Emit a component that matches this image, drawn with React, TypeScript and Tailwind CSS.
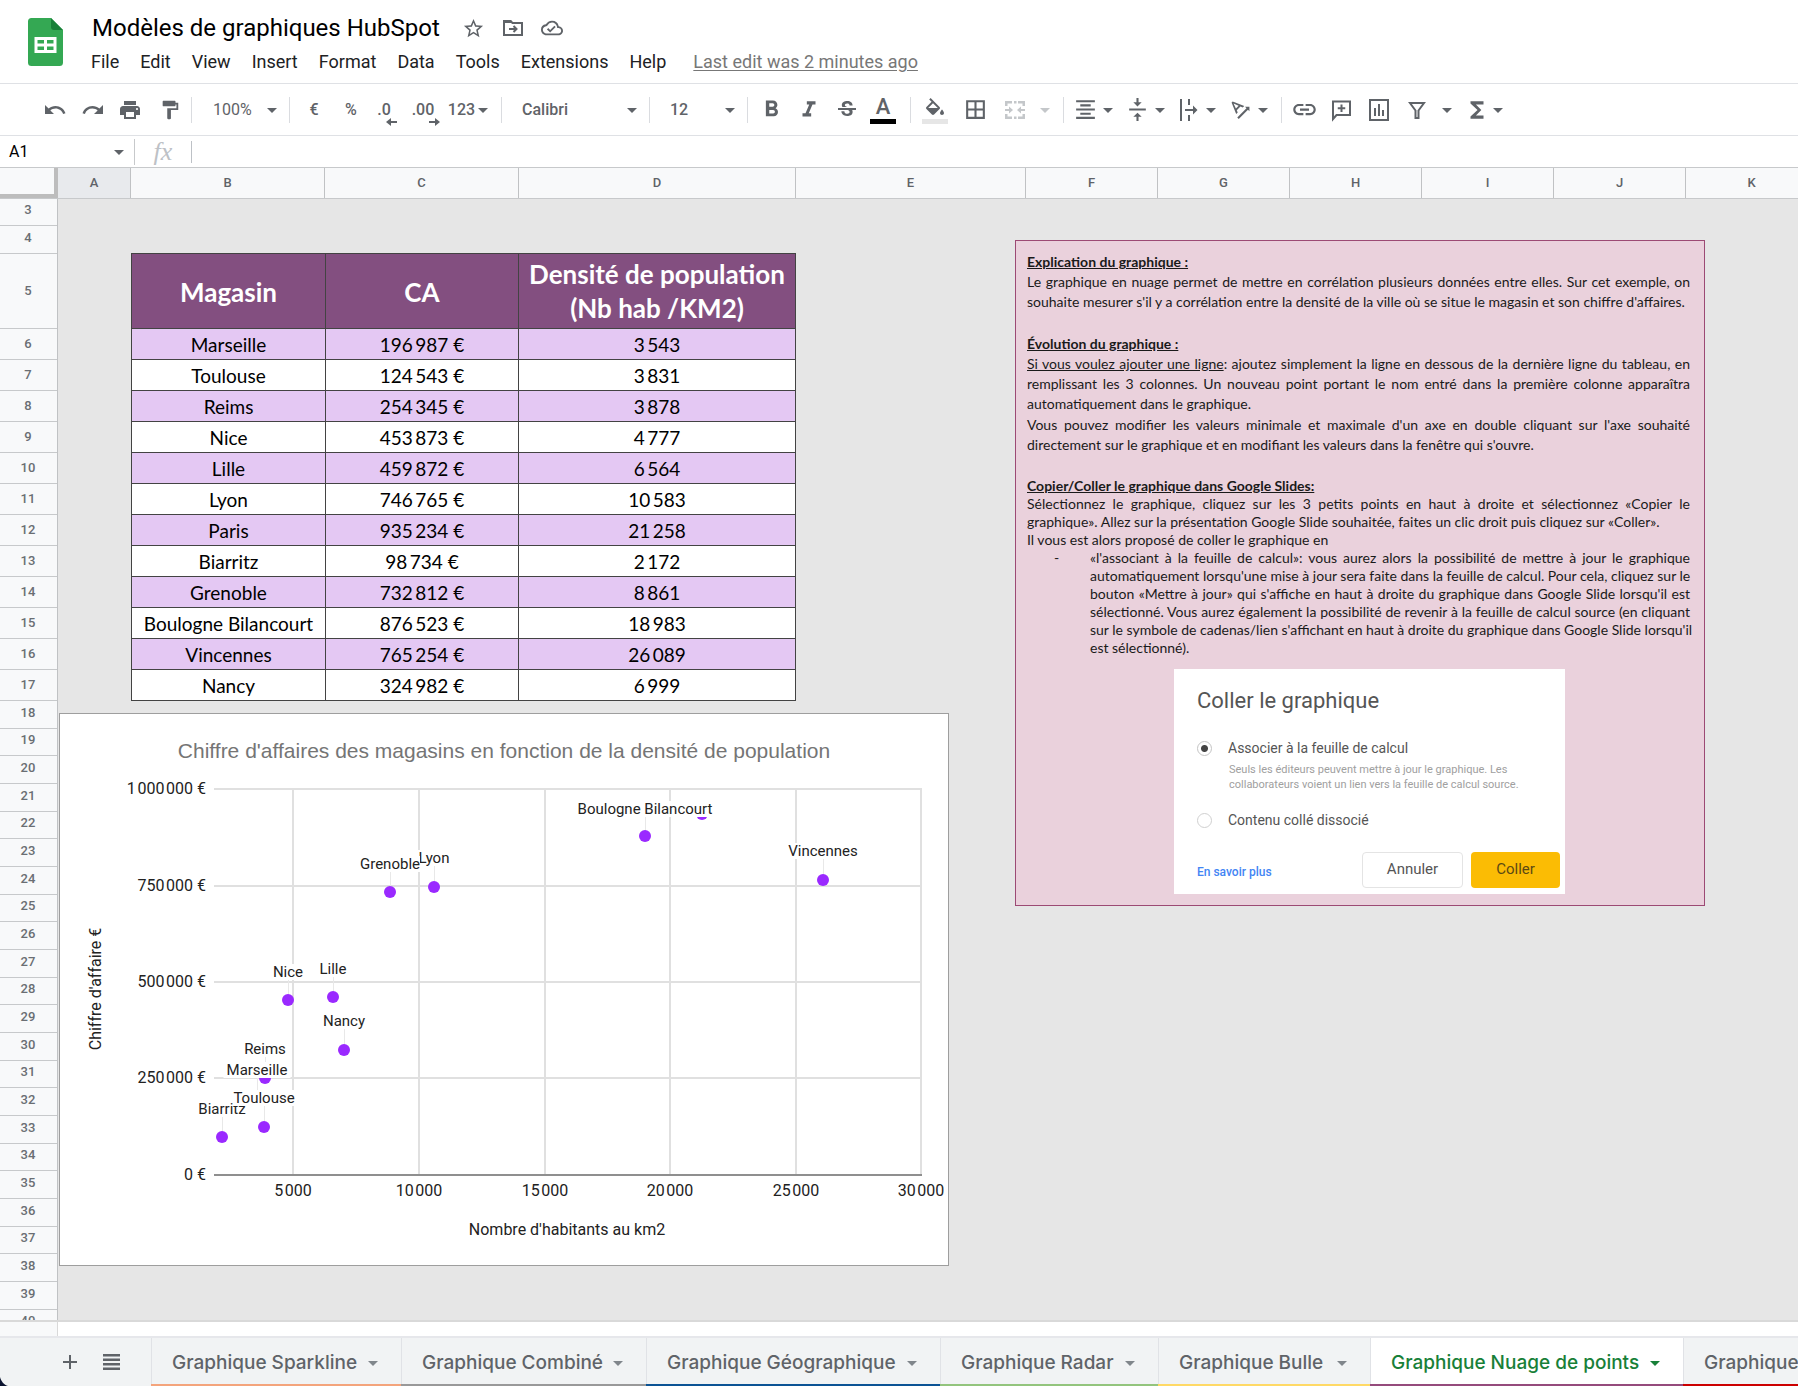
import React from "react";
import {
  MdAdd,
  MdArrowDropDown,
  MdBorderAll,
  MdFormatAlignCenter,
  MdFormatBold,
  MdFormatItalic,
  MdFormatPaint,
  MdFunctions,
  MdLink,
  MdOutlineCloudDone,
  MdPrint,
  MdRedo,
  MdStarBorder,
  MdStrikethroughS,
  MdTextRotationAngleup,
  MdUndo,
  MdVerticalAlignCenter,
} from "react-icons/md";

const NB = "\u2009";
const HAIR = "\u200A";

const menus = ["File", "Edit", "View", "Insert", "Format", "Data", "Tools", "Extensions", "Help"];

const columns = [
  { name: "A", width: "w-[73px] bg-[#e8eaed]" },
  { name: "B", width: "w-[194px]" },
  { name: "C", width: "w-[194px]" },
  { name: "D", width: "w-[277px]" },
  { name: "E", width: "w-[230px]" },
  { name: "F", width: "w-[132px]" },
  { name: "G", width: "w-[132px]" },
  { name: "H", width: "w-[132px]" },
  { name: "I", width: "w-[132px]" },
  { name: "J", width: "w-[132px]" },
  { name: "K", width: "w-[132px]" },
];

const stores = [
  ["Marseille", "196 987 €", "3 543"],
  ["Toulouse", "124 543 €", "3 831"],
  ["Reims", "254 345 €", "3 878"],
  ["Nice", "453 873 €", "4 777"],
  ["Lille", "459 872 €", "6 564"],
  ["Lyon", "746 765 €", "10 583"],
  ["Paris", "935 234 €", "21 258"],
  ["Biarritz", "98 734 €", "2 172"],
  ["Grenoble", "732 812 €", "8 861"],
  ["Boulogne Bilancourt", "876 523 €", "18 983"],
  ["Vincennes", "765 254 €", "26 089"],
  ["Nancy", "324 982 €", "6 999"],
].map(([name, ca, density]) => [name, ca.replace(" ", NB), density.replace(" ", NB)]);

const rowNumbers = Array.from({ length: 38 }, (_, i) => i + 3);

function rowHeight(n: number) {
  if (n === 3) return "h-[27px] pb-1";
  if (n === 4) return "h-[28px] pb-1";
  if (n === 5) return "h-[75px]";
  if (n <= 17) return "h-[31px] pb-px";
  return n % 3 === 1 ? "h-[27px] pb-1" : "h-[28px] pb-1";
}

const tabs = [
  { name: "Graphique Sparkline", width: "w-[250px]", line: "border-[#f4a47c]" },
  { name: "Graphique Combiné", width: "w-[245px]", line: "border-[#999999]" },
  { name: "Graphique Géographique", width: "w-[294px]", line: "border-[#0b5394]" },
  { name: "Graphique Radar", width: "w-[218px]", line: "border-[#93c47d]" },
  { name: "Graphique Bulle", width: "w-[212px]", line: "border-[#ffd966]" },
  { name: "Graphique Nuage de points", width: "w-[313px]", line: "border-[#954b7c]", active: true },
  { name: "Graphique", width: "w-[250px]", line: "border-[#cc0000]" },
];

/* ---------- toolbar pieces ---------- */

function Sep() {
  return <span className="h-[26px] w-px shrink-0 bg-[#dadce0]" />;
}

function Tool({ label, width, children }: { label: string; width: string; children: React.ReactNode }) {
  return (
    <button aria-label={label} className={`flex h-9 shrink-0 items-center justify-center ${width}`}>
      {children}
    </button>
  );
}

function Caret({ className = "" }: { className?: string }) {
  return <MdArrowDropDown size={24} className={`shrink-0 ${className}`} />;
}

function Swatch({ color, children }: { color: string; children: React.ReactNode }) {
  return (
    <span className="flex flex-col items-center">
      {children}
      <span className={`h-[5px] w-[26px] ${color}`} />
    </span>
  );
}

function Decimals({ text, dir }: { text: string; dir: "left" | "right" }) {
  return (
    <span className="flex flex-col items-end pt-2 text-base leading-4 font-medium">
      {text}
      <svg width="11" height="8" viewBox="0 0 11 8" className="-mr-1.5" fill="currentColor">
        {dir === "left" ? <path d="M0 4l5-4v3h6v2H5v3z" /> : <path d="M11 4L6 0v3H0v2h6v3z" />}
      </svg>
    </span>
  );
}

function BucketIcon() {
  return (
    <svg width="24" height="24" viewBox="0 -3 24 24" fill="currentColor">
      <path d="M16.56 8.94L7.62 0 6.21 1.41l2.38 2.38-5.15 5.15a1.49 1.49 0 0 0 0 2.12l5.5 5.5c.29.29.68.44 1.06.44s.77-.15 1.06-.44l5.5-5.5c.59-.58.59-1.53 0-2.12zM5.21 10L10 5.21 14.79 10zM19 11.500s-2 2.170-2 3.500c0 1.100.9 2 2 2s2-.9 2-2c0-1.330-2-3.500-2-3.500z" />
    </svg>
  );
}

function MergeIcon() {
  return (
    <svg width="24" height="24" viewBox="0 0 24 24" fill="currentColor">
      <path d="M2 3h7v2.500H4.500V8H2zM11 3h2.500v2.500H11zM15 3h7v5h-2.500V5.500H15zM2 16h2.500v2.500H9V21H2zM19.500 16H22v5h-7v-2.500h4.500zM11 18.500h2.500V21H11z" />
      <path d="M2 11h4V8.500l4 3.500-4 3.500V13H2zM22 11h-4V8.500L14 12l4 3.500V13h4z" />
    </svg>
  );
}

function WrapIcon() {
  return (
    <svg width="22" height="26" viewBox="0 0 22 26" fill="currentColor">
      <path d="M3 2h2v22H3zM11 2h2v6h-2zM11 18h2v6h-2zM8 12h8V8.500l4.500 4.500-4.500 4.500V14H8z" />
    </svg>
  );
}

function CommentIcon() {
  return (
    <svg width="22" height="24" viewBox="0 0 22 24" fill="none" stroke="currentColor" strokeWidth="2">
      <path d="M3 21V3.500h17V17H6.500z" />
      <path d="M11.500 6.500v7.500M7.750 10.250h7.500" />
    </svg>
  );
}

function ChartIcon() {
  return (
    <svg width="22" height="26" viewBox="0 0 22 26" fill="currentColor">
      <path d="M1 2h20v22H1zM3 4v18h16V4z" fillRule="evenodd" />
      <path d="M6 11h2v8H6zM10 7h2v12h-2zM14 13h2v6h-2z" />
    </svg>
  );
}

function FilterIcon() {
  return (
    <svg width="20" height="22" viewBox="0 0 20 22" fill="none" stroke="currentColor" strokeWidth="2">
      <path d="M3 4h14l-5.500 7.500V19h-3v-7.500z" />
    </svg>
  );
}

function MoveIcon() {
  return (
    <svg width="22" height="20" viewBox="0 0 22 20" fill="none" stroke="currentColor" strokeWidth="2">
      <path d="M2 3h6.500l2 2H20v12H2z" />
      <path d="M1 2h8l2 3H1z" fill="currentColor" stroke="none" />
      <path d="M7 11h7M11.500 8l3 3-3 3" />
    </svg>
  );
}

function ListIcon() {
  return (
    <svg width="17" height="16" viewBox="0 0 17 16" fill="currentColor">
      <path d="M0 0h17v2.500H0zM0 4.500h17V7H0zM0 9h17v2.500H0zM0 13.500h17V16H0z" />
    </svg>
  );
}

function SheetsLogo() {
  return (
    <svg width="35" height="48" viewBox="0 0 35 48" className="shrink-0" aria-label="Sheets">
      <path d="M3.500 0H23l12 12v32.500a3.500 3.500 0 0 1-3.500 3.500h-28A3.500 3.500 0 0 1 0 44.500v-41A3.500 3.500 0 0 1 3.500 0z" fill="#34a853" />
      <path d="M23 0l12 12H26a3 3 0 0 1-3-3z" fill="#188038" />
      <path d="M6.500 19h22v16h-22zM9.500 22v3.500H16V22zM19 22v3.500h6.500V22zM9.500 28.500V32H16v-3.500zM19 28.500V32h6.500v-3.500z" fill="#fff" fillRule="evenodd" />
    </svg>
  );
}

function Header() {
  return (
    <header className="flex h-[84px] shrink-0 items-start border-b border-[#dfe1e5] pl-7">
      <div className="pt-[18px]">
        <SheetsLogo />
      </div>
      <div className="flex flex-col pt-3">
        <div className="flex h-8 items-center pl-[29px]">
          <h1 className="text-2xl leading-8 text-black">Modèles de graphiques HubSpot</h1>
          <div className="flex gap-[15px] pl-[22px] text-[#5f6368]">
            <button aria-label="Star" className="flex w-6 justify-center">
              <MdStarBorder size={23} />
            </button>
            <button aria-label="Move" className="flex w-6 items-center justify-center">
              <MoveIcon />
            </button>
            <button aria-label="Saved to Drive" className="flex w-6 justify-center">
              <MdOutlineCloudDone size={22} />
            </button>
          </div>
        </div>
        <nav className="flex gap-[21px] pt-[6px] pl-7 text-lg leading-6 text-[#202124]">
          {menus.map((m) => (
            <button key={m}>{m}</button>
          ))}
          <a href="#history" className="ml-1.5 text-[#777777] underline underline-offset-2">
            Last edit was 2 minutes ago
          </a>
        </nav>
      </div>
    </header>
  );
}

function Toolbar() {
  return (
    <div className="flex h-[52px] shrink-0 items-center border-b border-[#dfe1e5] pl-9 text-base text-[#5f6368]">
      <Tool label="Undo" width="w-[38px]"><MdUndo size={24} /></Tool>
      <Tool label="Redo" width="w-[38px]"><MdRedo size={24} /></Tool>
      <Tool label="Print" width="w-9"><MdPrint size={24} /></Tool>
      <Tool label="Paint format" width="w-[43px]"><MdFormatPaint size={22} /></Tool>
      <Sep />
      <button className="flex h-9 w-[97px] shrink-0 items-center justify-between pr-[5px] pl-[21px]">
        100%
        <Caret />
      </button>
      <Sep />
      <Tool label="Format as currency" width="w-12"><span className="font-medium">€</span></Tool>
      <Tool label="Format as percent" width="w-[26px]"><span className="font-medium">%</span></Tool>
      <Tool label="Decrease decimal places" width="w-10"><Decimals text=".0" dir="left" /></Tool>
      <Tool label="Increase decimal places" width="w-[38px]"><Decimals text=".00" dir="right" /></Tool>
      <button className="flex h-9 w-[59px] shrink-0 items-center justify-center font-medium">
        123
        <Caret className="-ml-1" />
      </button>
      <Sep />
      <button className="flex h-9 w-[147px] shrink-0 items-center justify-between pr-[5px] pl-5 font-medium">
        Calibri
        <Caret />
      </button>
      <Sep />
      <button className="flex h-9 w-[97px] shrink-0 items-center justify-between pr-[5px] pl-5 font-medium">
        12
        <Caret />
      </button>
      <Sep />
      <Tool label="Bold" width="w-[46px]"><MdFormatBold size={27} /></Tool>
      <Tool label="Italic" width="w-[30px]"><MdFormatItalic size={26} /></Tool>
      <Tool label="Strikethrough" width="w-[46px]"><MdStrikethroughS size={24} /></Tool>
      <Tool label="Text color" width="w-[26px]">
        <Swatch color="bg-black"><span className="text-[22px] leading-6 font-medium">A</span></Swatch>
      </Tool>
      <span className="w-3.5" />
      <Sep />
      <Tool label="Fill color" width="w-12">
        <Swatch color="bg-[#e6e6e6]"><BucketIcon /></Swatch>
      </Tool>
      <Tool label="Borders" width="w-8"><MdBorderAll size={25} /></Tool>
      <button aria-label="Merge cells" disabled className="flex h-9 w-[72px] shrink-0 items-center justify-end gap-1.5 pr-1.5 text-[#c4c7ca]">
        <MergeIcon />
        <Caret />
      </button>
      <Sep />
      <button aria-label="Horizontal align" className="flex h-9 w-14 shrink-0 items-center justify-end">
        <MdFormatAlignCenter size={25} />
        <Caret className="-ml-0.5" />
      </button>
      <button aria-label="Vertical align" className="flex h-9 w-[52px] shrink-0 items-center justify-end">
        <MdVerticalAlignCenter size={25} />
        <Caret className="-ml-0.5" />
      </button>
      <button aria-label="Text wrapping" className="flex h-9 w-[51px] shrink-0 items-center justify-end">
        <WrapIcon />
        <Caret />
      </button>
      <button aria-label="Text rotation" className="flex h-9 w-[52px] shrink-0 items-center justify-end">
        <MdTextRotationAngleup size={25} />
        <Caret className="-ml-0.5" />
      </button>
      <span className="w-1.5" />
      <Sep />
      <Tool label="Insert link" width="w-11"><MdLink size={27} /></Tool>
      <Tool label="Insert comment" width="w-[30px]"><CommentIcon /></Tool>
      <Tool label="Insert chart" width="w-[46px]"><ChartIcon /></Tool>
      <Tool label="Filter" width="w-[30px]"><FilterIcon /></Tool>
      <Tool label="Filter views" width="w-[30px]"><Caret /></Tool>
      <button aria-label="Functions" className="flex h-9 w-12 shrink-0 items-center justify-end">
        <MdFunctions size={26} />
        <Caret className="-ml-1" />
      </button>
    </div>
  );
}

function FormulaBar() {
  return (
    <div className="flex h-8 shrink-0 items-center border-b border-[#c7c9cb]">
      <button className="flex h-8 w-[134px] shrink-0 items-center justify-between pr-[3px] pl-[9px] text-base text-black">
        A1
        <Caret className="text-[#5f6368]" />
      </button>
      <span className="h-[26px] w-px bg-[#c7c9cb]" />
      <span className="w-14 text-center font-['Liberation_Serif',serif] text-[26px] leading-8 text-[#bdc1c6] italic">fx</span>
      <span className="h-[22px] w-px bg-[#bdc1c6]" />
      <input aria-label="Formula" className="h-7 min-w-0 flex-1 px-2 text-base outline-none" />
    </div>
  );
}

/* ---------- sheet content ---------- */

function StoreTable() {
  return (
    <table className="ml-[73px] w-[664px] table-fixed border-collapse text-center font-['Lato',sans-serif] text-black">
      <colgroup>
        <col className="w-[194px]" />
        <col className="w-[193px]" />
        <col className="w-[277px]" />
      </colgroup>
      <thead>
        <tr className="h-[75px] bg-[#834f80] text-[26px] leading-[34px] text-white">
          <th className="border border-[#434343] p-0 pt-0.5 font-bold">Magasin</th>
          <th className="border border-[#434343] p-0 pt-0.5 font-bold">CA</th>
          <th className="border border-[#434343] p-0 font-bold whitespace-nowrap">
            Densité de population
            <br />
            (Nb hab /KM2)
          </th>
        </tr>
      </thead>
      <tbody className="text-[19px] leading-7">
        {stores.map((row, i) => (
          <tr key={row[0]} className={`h-[31px] ${i % 2 === 0 ? "bg-[#e4c8f3]" : "bg-white"}`}>
            {row.map((cell) => (
              <td key={cell} className="border border-[#434343] p-0 pt-0.5 whitespace-nowrap">{cell}</td>
            ))}
          </tr>
        ))}
      </tbody>
    </table>
  );
}

type Point = { name?: string; x: number; y: number; labelY?: number };

const points: Point[] = [
  { name: "Lyon", x: 374, y: 173, labelY: 144 },
  { name: "Grenoble", x: 330, y: 178, labelY: 150 },
  { name: "Nice", x: 228, y: 286, labelY: 258 },
  { name: "Lille", x: 273, y: 283, labelY: 255 },
  { name: "Nancy", x: 284, y: 336, labelY: 307 },
  { name: "Reims", x: 205, y: 364, labelY: 335 },
  { name: "Marseille", x: 197, y: 384, labelY: 356 },
  { name: "Biarritz", x: 162, y: 423, labelY: 395 },
  { name: "Toulouse", x: 204, y: 413, labelY: 384 },
  { x: 642, y: 100 },
  { name: "Boulogne Bilancourt", x: 585, y: 122, labelY: 95 },
  { name: "Vincennes", x: 763, y: 166, labelY: 137 },
];

const yTicks = [
  { label: `1${HAIR}000${HAIR}000 €`, y: 75 },
  { label: `750${HAIR}000 €`, y: 172 },
  { label: `500${HAIR}000 €`, y: 268 },
  { label: `250${HAIR}000 €`, y: 364 },
  { label: "0 €", y: 461 },
];

const xTicks = [
  { label: `5${HAIR}000`, x: 233 },
  { label: `10${HAIR}000`, x: 359 },
  { label: `15${HAIR}000`, x: 485 },
  { label: `20${HAIR}000`, x: 610 },
  { label: `25${HAIR}000`, x: 736 },
  { label: `30${HAIR}000`, x: 861 },
];

function ScatterChart() {
  return (
    <figure className="mt-3 ml-px w-[890px] border border-[#9e9e9e] bg-white">
      <svg viewBox="0 0 888 551" className="block w-full font-['Roboto',sans-serif] text-base" role="img" aria-label="Nuage de points">
        <text x="444" y="44" textAnchor="middle" fill="#757575" className="font-['Liberation_Sans',sans-serif] text-[21px]">
          Chiffre d'affaires des magasins en fonction de la densité de population
        </text>
        {xTicks.map((t) => (
          <g key={t.x}>
            <rect x={t.x - 1} y="75" width="2" height="386" fill="#e0e0e0" />
            <text x={t.x} y="482" textAnchor="middle" fill="#222">{t.label}</text>
          </g>
        ))}
        {yTicks.map((t) => (
          <g key={t.y}>
            <rect x="154" y={t.y - 1} width="708" height="2" fill={t.y === 461 ? "#8f8f8f" : "#e0e0e0"} />
            <text x="146" y={t.y + 5} textAnchor="end" fill="#222">{t.label}</text>
          </g>
        ))}
        {points.map((p) => (
          <g key={`${p.x}-${p.y}`}>
            {p.labelY !== undefined && <rect x={p.x} y={p.labelY} width="1" height={p.y - p.labelY} fill="#e8e8e8" />}
            <circle cx={p.x} cy={p.y} r="6" fill="#9a29ff" />
          </g>
        ))}
        {points.map((p) => {
          if (!p.name || p.labelY === undefined) return null;
          const w = p.name.length * 7 + 4;
          return (
            <g key={p.name}>
              <rect x={p.x - w / 2} y={p.labelY - 8} width={w} height="16" fill="#fff" />
              <text x={p.x} y={p.labelY + 5} textAnchor="middle" fill="#222" className="text-[15px]">{p.name}</text>
            </g>
          );
        })}
        <text x="507" y="521" textAnchor="middle" fill="#222">Nombre d'habitants au km2</text>
        <text transform="translate(41 275) rotate(-90)" textAnchor="middle" fill="#222">Chiffre d'affaire €</text>
      </svg>
    </figure>
  );
}

function J({ children }: { children: React.ReactNode }) {
  return <span className="block whitespace-nowrap [text-align-last:justify]">{children}</span>;
}

function L({ children }: { children: React.ReactNode }) {
  return <span className="block whitespace-nowrap">{children}</span>;
}

function PasteDialog() {
  return (
    <form className="mt-3 ml-[147px] flex w-[391px] flex-col bg-white pt-4 pr-[5px] pb-1.5 pl-[23px] text-[#555] [font-family:Roboto,sans-serif]">
      <h2 className="text-[22px] leading-8">Coller le graphique</h2>
      <label className="mt-[21px] flex items-center gap-4 text-sm leading-5">
        <input type="radio" name="paste" defaultChecked className="h-[15px] w-[15px] appearance-none rounded-full border border-[#c4c4c4] bg-white bg-[radial-gradient(circle,#444_0_3px,transparent_4px)]" />
        Associer à la feuille de calcul
      </label>
      <p className="mt-1 pl-8 text-[11px] leading-[15px] whitespace-nowrap text-[#a0a0a0]">
        Seuls les éditeurs peuvent mettre à jour le graphique. Les
        <br />
        collaborateurs voient un lien vers la feuille de calcul source.
      </p>
      <label className="mt-[18px] flex items-center gap-4 text-sm leading-5">
        <input type="radio" name="paste" className="h-[15px] w-[15px] appearance-none rounded-full border border-[#d0d0d0] bg-white" />
        Contenu collé dissocié
      </label>
      <div className="mt-[22px] flex items-center">
        <a href="#help" className="pt-1 text-xs font-medium text-[#4285f4]">En savoir plus</a>
        <button type="button" className="ml-auto h-9 w-[101px] rounded border border-[#e4e4e4] text-[15px]">Annuler</button>
        <button type="button" className="ml-2 h-9 w-[89px] rounded bg-[#fbbc04] text-[15px] text-[#5b4a14]">Coller</button>
      </div>
    </form>
  );
}

function Notes() {
  return (
    <aside className="mt-[41px] ml-[66px] h-[666px] w-[690px] shrink-0 border border-[#9c4a74] bg-[#ead1dc] pt-[11px] pr-3.5 pl-[11px] font-['Lato',sans-serif] text-sm text-[#1a1a1a]">
      <h3 className="leading-5 font-bold underline">Explication du graphique :</h3>
      <p className="leading-5">
        <J>Le graphique en nuage permet de mettre en corrélation plusieurs données entre elles. Sur cet exemple, on</J>
        <L>souhaite mesurer s'il y a corrélation entre la densité de la ville où se situe le magasin et son chiffre d'affaires.</L>
      </p>
      <h3 className="mt-[22px] leading-5 font-bold underline">Évolution du graphique :</h3>
      <p className="leading-5">
        <J><u>Si vous voulez ajouter une ligne</u>: ajoutez simplement la ligne en dessous de la dernière ligne du tableau, en</J>
        <J>remplissant les 3 colonnes. Un nouveau point portant le nom entré dans la première colonne apparaîtra</J>
        <L>automatiquement dans le graphique.</L>
      </p>
      <p className="pt-px leading-5">
        <J>Vous pouvez modifier les valeurs minimale et maximale d'un axe en double cliquant sur l'axe souhaité</J>
        <L>directement sur le graphique et en modifiant les valeurs dans la fenêtre qui s'ouvre.</L>
      </p>
      <h3 className="mt-[22px] leading-[18px] font-bold underline">Copier/Coller le graphique dans Google Slides:</h3>
      <p className="leading-[18px]">
        <J>Sélectionnez le graphique, cliquez sur les 3 petits points en haut à droite et sélectionnez «Copier le</J>
        <L>graphique». Allez sur la présentation Google Slide souhaitée, faites un clic droit puis cliquez sur «Coller».</L>
        <L>Il vous est alors proposé de coller le graphique en</L>
      </p>
      <div className="flex leading-[18px]">
        <span className="w-[63px] shrink-0 pl-[27px]">-</span>
        <p className="min-w-0 flex-1">
          <J>«l'associant à la feuille de calcul»: vous aurez alors la possibilité de mettre à jour le graphique</J>
          <J>automatiquement lorsqu'une mise à jour sera faite dans la feuille de calcul. Pour cela, cliquez sur le</J>
          <J>bouton «Mettre à jour» qui s'affiche en haut à droite du graphique dans Google Slide lorsqu'il est</J>
          <J>sélectionné. Vous aurez également la possibilité de revenir à la feuille de calcul source (en cliquant</J>
          <J>sur le symbole de cadenas/lien s'affichant en haut à droite du graphique dans Google Slide lorsqu'il</J>
          <L>est sélectionné).</L>
        </p>
      </div>
      <PasteDialog />
    </aside>
  );
}

function Sheet() {
  return (
    <main className="flex min-h-0 flex-1 flex-col overflow-hidden">
      <div className="flex h-[31px] shrink-0 border-b border-[#c7c9cb] bg-[#f8f9fa] text-[13px] font-medium text-[#5f6368]">
        <div className="w-[58px] shrink-0 border-r-4 border-b-4 border-[#bdbdbd]" />
        {columns.map((c) => (
          <div key={c.name} className={`flex shrink-0 items-center justify-center border-r border-[#c0c2c4] ${c.width}`}>{c.name}</div>
        ))}
      </div>
      <div className="flex min-h-0 flex-1 overflow-hidden">
        <div className="w-[58px] shrink-0 border-r border-[#c0c2c4] bg-[#f8f9fa] text-[13px] font-medium text-[#6a6e73]">
          {rowNumbers.map((n) => (
            <div key={n} className={`flex items-center justify-center border-b border-[#c7c9cb] pr-px ${rowHeight(n)}`}>{n}</div>
          ))}
        </div>
        <div className="flex flex-1 items-start bg-[#e6e6e6]">
          <div className="shrink-0 pt-[54px]">
            <StoreTable />
            <ScatterChart />
          </div>
          <Notes />
        </div>
      </div>
    </main>
  );
}

function TabBar() {
  return (
    <footer className="shrink-0">
      <div className="flex h-4 border-t-2 border-[#d9d9d9] bg-white">
        <span className="w-[58px] border-r border-[#d9d9d9] bg-[#f8f9fa]" />
      </div>
      <div className="relative flex h-[50px] overflow-hidden border-t-2 border-[#e6e7eb] bg-[#f1f3f4] text-[#5f6368]">
        <div className="flex w-[151px] shrink-0 items-center gap-[21px] pl-[58px]">
          <button aria-label="Add sheet"><MdAdd size={24} /></button>
          <button aria-label="All sheets"><ListIcon /></button>
        </div>
        {tabs.map((t) => (
          <button
            key={t.line}
            className={`flex shrink-0 items-center justify-between border-b-2 pt-1 pr-4 pl-[21px] font-['Inter',sans-serif] text-[19px] font-medium whitespace-nowrap shadow-[inset_1px_0_0_#e0e2e6] ${t.width} ${t.line} ${t.active ? "bg-white text-[#188038]" : ""}`}
          >
            {t.name}
            <Caret className={t.active ? "text-[#188038]" : "text-[#80868b]"} />
          </button>
        ))}
        <svg width="8" height="9" viewBox="0 0 8 9" className="absolute bottom-0 left-0">
          <path d="M0 0c1 4 4 8 8 9H0z" fill="#0b1430" />
        </svg>
      </div>
    </footer>
  );
}

export default function App() {
  return (
    <div className="flex h-screen flex-col overflow-hidden bg-white font-['Roboto',sans-serif]">
      <Header />
      <Toolbar />
      <FormulaBar />
      <Sheet />
      <TabBar />
    </div>
  );
}
